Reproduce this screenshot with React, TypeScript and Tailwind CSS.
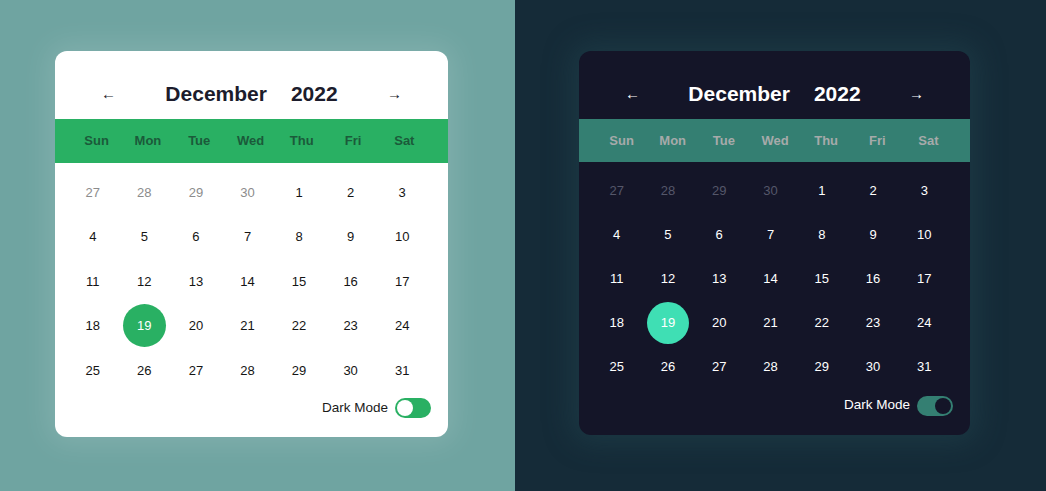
import React from "react";

type Theme = "light" | "dark";

const weekdays = ["Sun", "Mon", "Tue", "Wed", "Thu", "Fri", "Sat"];
const prev = [27, 28, 29, 30];
const days = Array.from({ length: 31 }, (_, i) => i + 1);

function Calendar({ theme }: { theme: Theme }) {
  const dark = theme === "dark";
  return (
    <div
      className={
        dark
          ? "w-[391px] h-[384px] rounded-[12px] bg-[#141528] shadow-[0_0_28px_8px_rgba(40,80,90,0.35)] flex flex-col"
          : "w-[393px] h-[386px] rounded-[12px] bg-white shadow-[0_0_28px_8px_rgba(255,255,255,0.12)] flex flex-col"
      }
      style={{ fontFamily: '"Liberation Sans", Arial, sans-serif' }}
    >
      {/* header */}
      <div className="h-[68px] pt-[18px] flex items-center justify-between pl-[46px] pr-[46px]">
        <span className={dark ? "text-[15px] font-bold text-white" : "text-[15px] font-bold text-[#1a1a2a]"}>←</span>
        <div className={dark ? "flex gap-[24px] text-[21px] font-bold text-white" : "flex gap-[24px] text-[21px] font-bold text-[#1c1c2c]"}>
          <span>December</span>
          <span>2022</span>
        </div>
        <span className={dark ? "text-[15px] font-bold text-white" : "text-[15px] font-bold text-[#1a1a2a]"}>→</span>
      </div>
      {/* weekday bar */}
      <div
        className={
          dark
            ? "h-[43px] bg-[#347f72] grid grid-cols-7 items-center pl-[17px] pr-[16px]"
            : "h-[44px] bg-[#29b063] grid grid-cols-7 items-center pl-[16px] pr-[18px]"
        }
      >
        {weekdays.map((w) => (
          <div
            key={w}
            className={dark ? "text-center text-[13px] font-bold text-[#a6aaaa]" : "text-center text-[13px] font-bold text-[#1b5a3a]"}
          >
            {w}
          </div>
        ))}
      </div>
      {/* days */}
      <div className={dark ? "mt-[7px] grid grid-cols-7 auto-rows-[44px] pl-[12px] pr-[20px]" : "mt-[7px] grid grid-cols-7 auto-rows-[44.5px] pl-[12px] pr-[20px]"}>
        {prev.map((d) => (
          <div key={"p" + d} className={dark ? "flex items-center justify-center text-[13px] text-[#55576a]" : "flex items-center justify-center text-[13px] text-[#8c8c8c]"}>
            {d}
          </div>
        ))}
        {days.map((d) => (
          <div key={d} className="flex items-center justify-center">
            {d === 19 ? (
              <span
                className={
                  dark
                    ? "w-[42px] h-[42px] rounded-full bg-[#3fdfb4] text-white text-[13px] flex items-center justify-center"
                    : "w-[43px] h-[43px] rounded-full bg-[#29b063] text-white text-[13px] flex items-center justify-center"
                }
              >
                {d}
              </span>
            ) : (
              <span className={dark ? "text-[13px] text-white" : "text-[13px] text-[#151515]"}>{d}</span>
            )}
          </div>
        ))}
      </div>
      {/* footer */}
      <div className="flex-1 flex items-center justify-end gap-[7px] pr-[17px] pb-[13px]">
        <span className={dark ? "text-[13.5px] text-white" : "text-[13.5px] text-[#1a1a1a]"}>Dark Mode</span>
        {dark ? (
          <span className="w-[36px] h-[20px] rounded-full bg-[#347f72] flex items-center justify-end pr-[2px]">
            <span className="w-[16px] h-[16px] rounded-full bg-[#141528]" />
          </span>
        ) : (
          <span className="w-[36px] h-[20px] rounded-full bg-[#29b063] flex items-center justify-start pl-[2px]">
            <span className="w-[16px] h-[16px] rounded-full bg-white" />
          </span>
        )}
      </div>
    </div>
  );
}

export default function App() {
  return (
    <div className="w-[1046px] h-[491px] flex">
      <div className="w-[515px] h-full bg-[#6fa4a1] pt-[51px] pl-[55px]">
        <Calendar theme="light" />
      </div>
      <div className="w-[531px] h-full bg-[#152b38] pt-[51px] pl-[64px]">
        <Calendar theme="dark" />
      </div>
    </div>
  );
}
